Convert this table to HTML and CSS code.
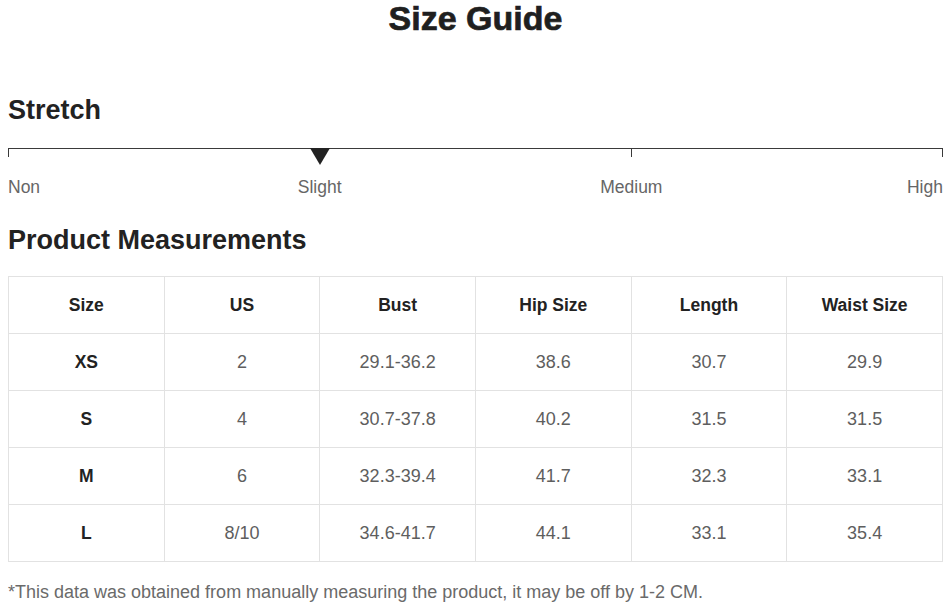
FILE: index.html
```html
<!DOCTYPE html>
<html lang="en">
<head>
<meta charset="utf-8">
<title>Size Guide</title>
<link rel="stylesheet" href="styles.css">
</head>
<body>
<main class="page">
  <h1 class="title">Size Guide</h1>

  <h2 class="section-title stretch-title">Stretch</h2>
  <div class="scale">
    <div class="seg seg-first"></div>
    <div class="seg seg-mid"><span class="marker"></span></div>
    <div class="seg seg-last"></div>
  </div>
  <div class="scale-labels">
    <span class="lbl lbl-non">Non</span>
    <span class="lbl lbl-slight">Slight</span>
    <span class="lbl lbl-medium">Medium</span>
    <span class="lbl lbl-high">High</span>
  </div>

  <h2 class="section-title measure-title">Product Measurements</h2>
  <table class="sizes">
    <thead>
      <tr><th>Size</th><th>US</th><th>Bust</th><th>Hip Size</th><th>Length</th><th>Waist Size</th></tr>
    </thead>
    <tbody>
      <tr><th>XS</th><td>2</td><td>29.1-36.2</td><td>38.6</td><td>30.7</td><td>29.9</td></tr>
      <tr><th>S</th><td>4</td><td>30.7-37.8</td><td>40.2</td><td>31.5</td><td>31.5</td></tr>
      <tr><th>M</th><td>6</td><td>32.3-39.4</td><td>41.7</td><td>32.3</td><td>33.1</td></tr>
      <tr><th>L</th><td>8/10</td><td>34.6-41.7</td><td>44.1</td><td>33.1</td><td>35.4</td></tr>
    </tbody>
  </table>
  <p class="note">*This data was obtained from manually measuring the product, it may be off by 1-2 CM.</p>
</main>
</body>
</html>
```
FILE: styles.css
```css
* { box-sizing: border-box; }
html, body { margin: 0; padding: 0; background: #fff; }
body {
  font-family: "Liberation Sans", Arial, sans-serif;
  color: #222;
  width: 946px;
  height: 608px;
  overflow: hidden;
}
.page {
  display: flex;
  flex-direction: column;
  padding: 0 3px 0 8px;
}
.title {
  margin: 0;
  height: 36px;
  line-height: 36px;
  font-size: 34px;
  font-weight: 700;
  text-align: center;
  color: #1f1f1f;
  -webkit-text-stroke: 0.7px #1f1f1f;
}
.section-title {
  margin: 0;
  font-size: 27px;
  line-height: 30px;
  height: 30px;
  font-weight: 700;
  color: #222;
}
.stretch-title { margin-top: 59px; }
.scale {
  margin-top: 23px;
  display: grid;
  grid-template-columns: 1fr 1fr 1fr;
  height: 20px;
}
.seg {
  position: relative;
  height: 9px;
  border-top: 1.5px solid #3a3a3a;
}
.seg-first { border-left: 1.5px solid #3a3a3a; }
.seg-last { border-left: 1px solid #3a3a3a; border-right: 1px solid #3a3a3a; }
.marker {
  position: absolute;
  left: -10px;
  top: -1px;
  width: 0;
  height: 0;
  border-left: 10px solid transparent;
  border-right: 10px solid transparent;
  border-top: 17px solid #222;
}
.scale-labels {
  margin-top: 8px;
  display: grid;
  grid-template-columns: repeat(6, 1fr);
  font-size: 17.5px;
  line-height: 22px;
  color: #666;
}
.lbl-non { grid-column: 1; text-align: left; }
.lbl-slight { grid-column: 2 / 4; text-align: center; }
.lbl-medium { grid-column: 4 / 6; text-align: center; }
.lbl-high { grid-column: 6; text-align: right; }
.measure-title { margin-top: 27px; }
.sizes {
  margin-top: 21px;
  width: 935px;
  border-collapse: collapse;
  table-layout: fixed;
}
.sizes th, .sizes td {
  height: 57px;
  border: 1px solid #e2e2e2;
  text-align: center;
  vertical-align: middle;
  font-size: 17.5px;
  padding: 0;
}
.sizes th { font-weight: 700; color: #222; }
.sizes td { color: #5e5e5e; font-size: 18px; }
.note {
  margin: 19px 0 0;
  font-size: 18px;
  line-height: 22px;
  color: #6a6a6a;
}
```
